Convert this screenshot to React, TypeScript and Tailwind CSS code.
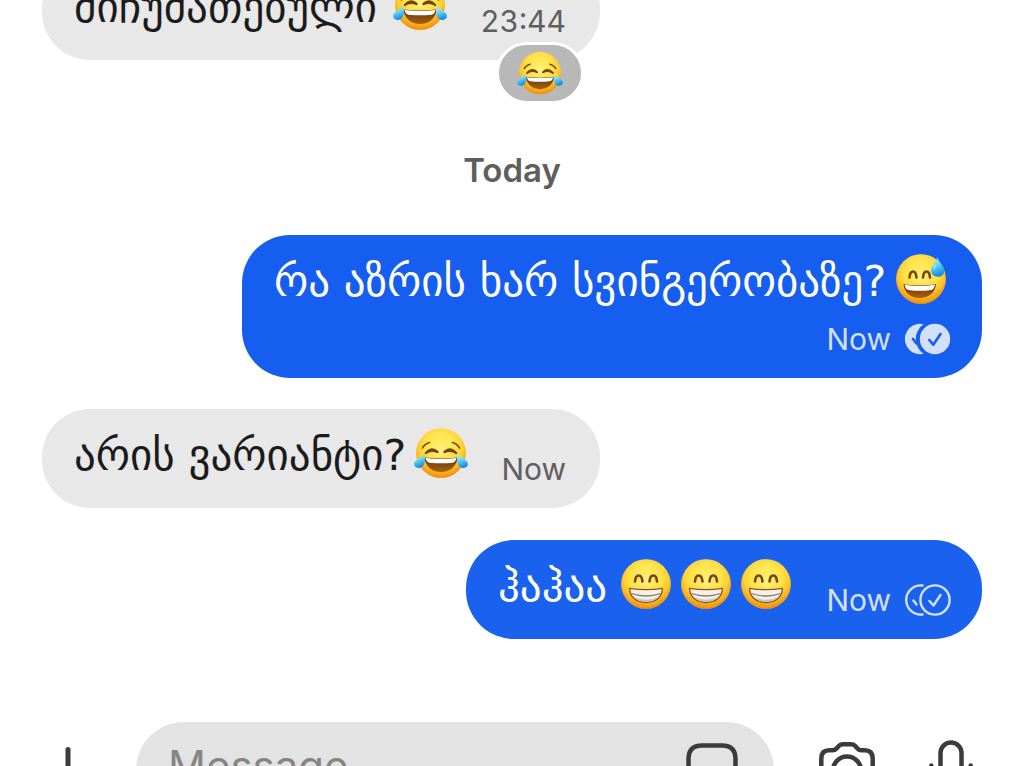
import { useId, type ReactNode } from "react";

type EmojiKind = "joy" | "sweat" | "grin";

const emojiNames: Record<EmojiKind, string> = {
  joy: "Face with tears of joy",
  sweat: "Grinning face with sweat",
  grin: "Beaming face with smiling eyes",
};

function Emoji({ kind, className = "size-[54px]" }: { kind: EmojiKind; className?: string }) {
  const id = useId();
  const face = `${id}face`;
  const edge = `${id}edge`;
  const drop = `${id}drop`;
  const mouth = `${id}mouth`;
  return (
    <svg viewBox="0 0 54 54" role="img" aria-label={emojiNames[kind]} className={`shrink-0 ${className}`}>
      <defs>
        <linearGradient id={face} x1="0" y1="0" x2="0" y2="1">
          <stop offset="0" stopColor="#ffec5a" />
          <stop offset="0.5" stopColor="#ffdb38" />
          <stop offset="1" stopColor="#fa9c14" />
        </linearGradient>
        <radialGradient id={edge} cx="0.5" cy="0.45" r="0.55">
          <stop offset="0" stopColor="#fffba8" stopOpacity="0.7" />
          <stop offset="0.6" stopColor="#ffe850" stopOpacity="0.4" />
          <stop offset="0.8" stopColor="#fbb024" stopOpacity="0.3" />
          <stop offset="1" stopColor="#e98a08" stopOpacity="0.95" />
        </radialGradient>
        <linearGradient id={drop} x1="0" y1="0" x2="0.3" y2="1">
          <stop offset="0" stopColor="#b4f0fb" />
          <stop offset="0.45" stopColor="#74d8f7" />
          <stop offset="1" stopColor="#128fe6" />
        </linearGradient>
        <linearGradient id={mouth} x1="0" y1="0" x2="0" y2="1">
          <stop offset="0" stopColor="#5f3208" />
          <stop offset="1" stopColor="#a8640f" />
        </linearGradient>
      </defs>
      <circle cx="27" cy="27" r="24.8" fill={`url(#${face})`} />
      <circle cx="27" cy="27" r="24.8" fill={`url(#${edge})`} />
      {kind === "joy" && (
        <>
          <g fill="none" stroke="#75430a" strokeLinecap="round">
            <path d="M8.500 22Q10.500 18 15.500 16.500M45.500 22Q43.500 18 38.500 16.500" strokeWidth="1.600" />
            <path d="M12 27Q17.500 20.500 23.500 26M30.500 26Q36.500 20.500 42 27" strokeWidth="2.400" />
            <path d="M14 26Q18 24.600 22.500 25.800M31.500 25.800Q36 24.600 40 26" strokeWidth="1.400" />
          </g>
          <path d="M10.500 31.500Q27 33.500 43.500 31.500C43 40 36 46 27 46S11 40 10.500 31.500Z" fill={`url(#${mouth})`} />
          <path d="M11.500 32Q27 34 42.500 32Q41.500 36.300 38.500 36.700Q27 38 15.500 36.700Q12.500 36.300 11.500 32Z" fill="#fff" />
          <path d="M10.500 28C11.700 34 11 41 5.500 41.900C1 42.600 -1 38.800 .8 35.800C3 32.500 8 31.500 10.500 28Z" fill={`url(#${drop})`} />
          <path d="M43.500 28C42.300 34 43 41 48.500 41.900C53 42.600 55 38.800 53.200 35.800C51 32.500 46 31.500 43.500 28Z" fill={`url(#${drop})`} />
        </>
      )}
      {kind === "sweat" && (
        <>
          <path d="M15.500 25.500Q16 19.500 19 19.500T22.500 25.500M29 25.500Q29.500 19.500 32.500 19.500T36 25.500" fill="none" stroke="#794507" strokeWidth="2.600" strokeLinecap="round" />
          <path d="M9.500 32.300Q25.700 34.800 42 32.300C41 41 34.500 46 25.700 46S10.500 41 9.500 32.300Z" fill={`url(#${mouth})`} />
          <path d="M10.600 32.800Q25.700 35.300 40.900 32.800Q40 37.600 37 37.900Q25.700 39.600 14.500 37.900Q11.500 37.600 10.600 32.800Z" fill="#fff" />
          <path d="M43.300 5C44.800 10.500 50.200 13.500 50.200 18.500C50.200 22.600 47.300 25 43.500 24.800C39.100 24.500 36.400 21.500 37.100 17.500C38 13 42.300 10.500 43.300 5Z" fill={`url(#${drop})`} />
          <path d="M42.800 11Q39.500 15 39.500 18.500Q41 15.500 42.800 11Z" fill="#ecfcff" />
        </>
      )}
      {kind === "grin" && (
        <>
          <path d="M16 24.500Q16.500 18.500 19.700 18.500T23.500 24.500M30.500 24.500Q31 18.500 34.300 18.500T38 24.500" fill="none" stroke="#794507" strokeWidth="2.600" strokeLinecap="round" />
          <path d="M10.500 31.300Q27 34 43.500 31.300C43 40.500 36.500 45.500 27 45.500S11 40.500 10.500 31.300Z" fill="#f4f0ec" stroke="#8a5a1c" strokeWidth="1.300" strokeLinejoin="round" />
          <path d="M12.500 36.500Q27 41.500 41.500 36.500" fill="none" stroke="#8d7a6a" strokeWidth="1.300" />
          <path d="M15 40Q27 45.500 39 40Q34 44.700 27 44.700T15 40Z" fill="#c9c2bb" />
        </>
      )}
    </svg>
  );
}

function Receipt({ read }: { read: boolean }) {
  return (
    <svg viewBox="0 0 48 32" role="img" aria-label={read ? "Read" : "Delivered"} className="h-8 w-12 shrink-0" fill="none">
      {read ? (
        <>
          <path d="M20.500 1.200A15.200 15.200 0 1 0 20.500 30.800A18 18 0 0 1 20.500 1.200Z" fill="#d3e0fc" />
          <path d="M10 16L13.500 20.500" stroke="#155eef" strokeWidth="2.600" strokeLinecap="round" />
          <circle cx="32" cy="16" r="15.200" fill="#d3e0fc" />
          <path d="M26.300 17L30.300 21.700L37.500 11" stroke="#155eef" strokeWidth="2.600" strokeLinecap="round" strokeLinejoin="round" />
        </>
      ) : (
        <g stroke="#d3e0fc" strokeWidth="2.400" strokeLinecap="round" strokeLinejoin="round">
          <path d="M19.500 1.500A14.600 14.600 0 1 0 19.500 30.500" />
          <path d="M10.500 16.500L13.500 20.500" />
          <circle cx="32" cy="16" r="14.600" />
          <path d="M26.500 17L30.500 21.500L37.500 11" />
        </g>
      )}
    </svg>
  );
}

function Time({ children, sent = false }: { children: ReactNode; sent?: boolean }) {
  return (
    <time className={`font-[Inter,sans-serif] text-[30px] leading-8 tabular-nums ${sent ? "text-[#d3e0fc]" : "text-[#5e5e5e]"}`}>
      {children}
    </time>
  );
}

function Body({ text, children, className = "" }: { text: string; children: ReactNode; className?: string }) {
  return (
    <p className={`flex h-[54px] items-center whitespace-nowrap ${className}`}>
      <span className="pt-1">{text}</span>
      {children}
    </p>
  );
}

export default function App() {
  return (
    <main className="flex h-screen flex-col overflow-hidden bg-white px-[42px] font-['DejaVu_Sans',sans-serif] text-[43px] leading-[54px] text-[#1b1b1b]">
      <article className="relative -mt-[39px] flex h-[99px] w-[558px] shrink-0 justify-between self-start rounded-[48px] bg-[#e8e8e8] pt-[17px] pr-[34px] pb-[23px] pl-8">
        <Body text="მიჩუმათებული" className="gap-4">
          <Emoji kind="joy" />
        </Body>
        <div className="flex self-end">
          <Time>23:44</Time>
        </div>
        <button
          type="button"
          aria-label="Reaction: face with tears of joy"
          className="absolute right-4 -bottom-11 flex h-[62px] w-[88px] items-center justify-center rounded-full border-[3px] border-white bg-[#b8b8b8]"
        >
          <Emoji kind="joy" className="size-[46px]" />
        </button>
      </article>

      <h2 className="mt-[90px] mb-[45px] shrink-0 text-center font-[Inter,sans-serif] text-[33px] leading-10 font-semibold text-[#5e5e5e]">
        Today
      </h2>

      <article className="flex h-[143px] w-[740px] shrink-0 flex-col justify-between self-end rounded-[48px] bg-[#155eef] pt-[17px] pr-[31px] pb-[23px] pl-8 text-white">
        <Body text="რა აზრის ხარ სვინგერობაზე?" className="gap-2">
          <Emoji kind="sweat" />
        </Body>
        <div className="flex gap-3 self-end">
          <Time sent>Now</Time>
          <Receipt read />
        </div>
      </article>

      <article className="mt-[31px] flex h-[99px] w-[558px] shrink-0 justify-between self-start rounded-[48px] bg-[#e8e8e8] pt-[17px] pr-[34px] pb-[23px] pl-8">
        <Body text="არის ვარიანტი?" className="gap-2">
          <Emoji kind="joy" />
        </Body>
        <div className="flex self-end">
          <Time>Now</Time>
        </div>
      </article>

      <article className="mt-8 flex h-[99px] w-[516px] shrink-0 justify-between self-end rounded-[48px] bg-[#1a61ed] pt-[17px] pr-[31px] pb-[23px] pl-8 text-white">
        <Body text="ჰაჰაა" className="gap-3">
          <span className="flex gap-[6px]">
            <Emoji kind="grin" />
            <Emoji kind="grin" />
            <Emoji kind="grin" />
          </span>
        </Body>
        <div className="flex gap-3 self-end">
          <Time sent>Now</Time>
          <Receipt read={false} />
        </div>
      </article>

      <form className="mt-[83px] mr-px flex h-24 shrink-0 items-center text-[#3b3b3b]" onSubmit={(e) => e.preventDefault()}>
        <button type="button" aria-label="Add attachment" className="w-[94px] shrink-0">
          <svg viewBox="0 0 52 52" className="size-[52px]" fill="none" stroke="currentColor" strokeWidth="5" strokeLinecap="round">
            <path d="M26 5.500V46.500M5.500 26H46.500" />
          </svg>
        </button>
        <div className="flex h-24 min-w-0 flex-1 items-center rounded-[48px] bg-[#e3e3e3] pr-[34px] pb-[2px] pl-8">
          <input
            type="text"
            aria-label="Message"
            placeholder="Message"
            className="h-16 min-w-0 flex-1 bg-transparent pb-2 font-[Inter,sans-serif] text-[42px] leading-[54px] outline-none placeholder:text-[#858585]"
          />
          <button type="button" aria-label="Stickers" className="shrink-0">
            <svg viewBox="0 0 56 56" className="size-14" fill="none" stroke="currentColor" strokeWidth="4.500" strokeLinejoin="round">
              <path d="M18 4.500H38Q51.500 4.500 51.500 18V32L32 51.500H18Q4.500 51.500 4.500 38V18Q4.500 4.500 18 4.500Z" />
              <path d="M51.500 32H42Q32 32 32 42V51.500" />
            </svg>
          </button>
        </div>
        <button type="button" aria-label="Camera" className="mb-1 ml-[43px] shrink-0">
          <svg viewBox="0 0 60 60" className="size-[60px]" fill="none" stroke="currentColor" strokeWidth="4.500" strokeLinejoin="round">
            <path d="M4.300 20.500Q4.300 12.300 12.500 12.300H15.500Q18 12.300 19.500 10.500L22 7.800Q23.500 6.200 26 6.200H34Q36.500 6.200 38 7.800L40.500 10.500Q42 12.300 44.500 12.300H47.500Q55.700 12.300 55.700 20.500V43Q55.700 51.500 47.500 51.500H12.500Q4.300 51.500 4.300 43Z" />
            <circle cx="30" cy="32.500" r="14" />
          </svg>
        </button>
        <button type="button" aria-label="Record voice message" className="mb-1 ml-11 shrink-0">
          <svg viewBox="0 0 60 60" className="size-[60px]" fill="none" stroke="currentColor" strokeWidth="4.500" strokeLinecap="round">
            <rect x="19.500" y="4.500" width="21" height="34" rx="10.500" />
            <path d="M10.300 27.500V29Q10.300 48 30 48T49.700 29V27.500M30 48V56" />
          </svg>
        </button>
      </form>
    </main>
  );
}
